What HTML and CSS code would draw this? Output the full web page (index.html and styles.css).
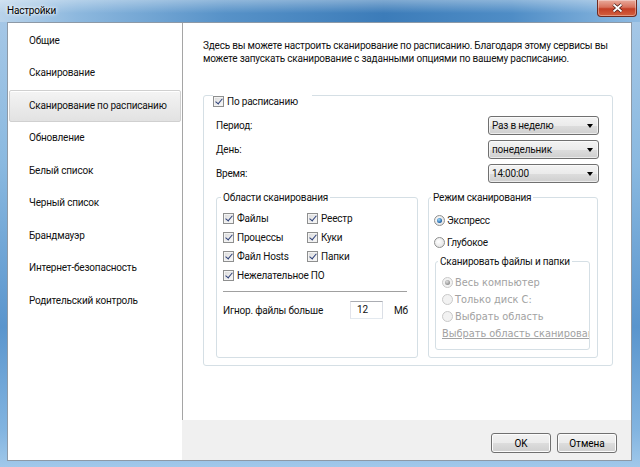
FILE: index.html
```html
<!DOCTYPE html>
<html lang="ru">
<head>
    <meta charset="UTF-8">
    <meta name="viewport" content="width=device-width, initial-scale=1.0">
    <title>Настройки</title>
    <link rel="stylesheet" href="styles.css">
</head>
<body>
<div class="window">
    <div class="titlebar">
        <span class="title">Настройки</span>
        <span class="close">
            <svg width="13" height="10" viewBox="0 0 13 10">
                <path d="M2.5 1.5 L10.5 8.5 M10.5 1.5 L2.5 8.5" stroke="#4a1d15" stroke-width="3.4" fill="none"/>
                <path d="M2.5 1.5 L10.5 8.5 M10.5 1.5 L2.5 8.5" stroke="#fff" stroke-width="1.8" fill="none"/>
            </svg>
        </span>
    </div>

    <div class="client">
        <ul class="nav">
            <li>Общие</li>
            <li>Сканирование</li>
            <li class="active">Сканирование по расписанию</li>
            <li>Обновление</li>
            <li>Белый список</li>
            <li>Черный список</li>
            <li>Брандмауэр</li>
            <li>Интернет-безопасность</li>
            <li>Родительский контроль</li>
        </ul>

        <div class="main">
            <div class="content">
                <p class="intro">Здесь вы можете настроить сканирование по расписанию. Благодаря этому сервисы вы<br>можете запускать сканирование с заданными опциями по вашему расписанию.</p>

                <fieldset class="schedule">
                    <legend><label class="opt"><span class="check on"></span>По расписанию</label></legend>

                    <div class="fields">
                        <span>Период:</span>
                        <div class="select">Раз в неделю</div>
                        <span>День:</span>
                        <div class="select">понедельник</div>
                        <span>Время:</span>
                        <div class="select">14:00:00</div>
                    </div>

                    <div class="groups">
                        <fieldset class="group areas">
                            <legend>Области сканирования</legend>
                            <div class="checks">
                                <label class="opt"><span class="check on"></span>Файлы</label>
                                <label class="opt"><span class="check on"></span>Реестр</label>
                                <label class="opt"><span class="check on"></span>Процессы</label>
                                <label class="opt"><span class="check on"></span>Куки</label>
                                <label class="opt"><span class="check on"></span>Файл Hosts</label>
                                <label class="opt"><span class="check on"></span>Папки</label>
                                <label class="opt wide"><span class="check on"></span>Нежелательное ПО</label>
                            </div>
                            <hr>
                            <div class="size">
                                <span class="size-label">Игнор. файлы больше</span>
                                <span class="input">12</span>
                                <span class="unit">Мб</span>
                            </div>
                        </fieldset>

                        <fieldset class="group modes">
                            <legend>Режим сканирования</legend>
                            <label class="opt radio-row"><span class="radio on"></span>Экспресс</label>
                            <label class="opt radio-row"><span class="radio"></span>Глубокое</label>

                            <fieldset class="group targets">
                                <legend>Сканировать файлы и папки</legend>
                                <label class="opt target"><span class="radio on off"></span>Весь компьютер</label>
                                <label class="opt target"><span class="radio off"></span>Только диск C:</label>
                                <label class="opt target"><span class="radio off"></span>Выбрать область</label>
                                <a class="link">Выбрать область сканирования</a>
                            </fieldset>
                        </fieldset>
                    </div>
                </fieldset>
            </div>

            <div class="footer">
                <button class="btn">OK</button>
                <button class="btn">Отмена</button>
            </div>
        </div>
    </div>
</div>
</body>
</html>
```

FILE: styles.css
```css
*{
    margin: 0;
    padding: 0;
    box-sizing: border-box;
}
html, body{
    width: 640px;
    height: 467px;
    overflow: hidden;
}
body{
    font-family: Roboto, "Noto Sans", Arial, sans-serif;
    font-size: 10px;
    letter-spacing: -0.2px;
    color: #111;
    background: linear-gradient(to bottom, #a9c9e7 0%, #8ab9e0 35%, #5a95cd 70%, #82b4e0 92%, #a0c8ea 100%);
}
.window{
    display: flex;
    flex-direction: column;
    height: 467px;
}
.titlebar{
    height: 22px;
    display: flex;
    justify-content: space-between;
    align-items: flex-start;
    background:
        linear-gradient(to bottom, rgba(255,255,255,.35), rgba(255,255,255,0) 60%),
        linear-gradient(to right, #b9d3ea 0%, #8db8de 12%, #5792c8 35%, #3c7cb9 60%, #4f8dc6 80%, #8fbbe2 100%);
}
.title{
    padding: 4px 0 0 7px;
    line-height: 14px;
    color: #000;
    text-shadow: 0 0 5px #fff, 0 0 3px #fff;
}
.close{
    width: 40px;
    height: 17px;
    margin-right: 3px;
    display: flex;
    align-items: center;
    justify-content: center;
    border: 1px solid #6f2a20;
    border-top: 0;
    border-radius: 0 0 4px 4px;
    background: linear-gradient(to bottom, #e9ab9c 0%, #d8725c 45%, #c43f25 55%, #d4603f 100%);
    box-shadow: inset 0 0 0 1px rgba(255,255,255,.35);
}
.client{
    flex: 1;
    display: flex;
    margin: 0 8px 6px 7px;
    border: 1px solid #8d99a6;
    background: #fff;
}

/* left menu */
.nav{
    list-style: none;
    width: 174px;
    flex: none;
    padding-top: 1.75px;
}
.nav li{
    height: 32.5px;
    line-height: 30.5px;
    margin: 0 1px;
    padding-left: 19px;
    border: 1px solid transparent;
    border-radius: 2px;
    white-space: nowrap;
}
.nav li.active{
    background: linear-gradient(to bottom, #f4f4f4, #e2e2e2);
    border-color: #d0d0d0;
    box-shadow: inset 0 1px 0 #fff;
}

.main{
    flex: 1;
    min-width: 0;
    display: flex;
    flex-direction: column;
}
.content{
    flex: 1;
    border-left: 1px solid #a5a5a5;
    padding: 16px 18px 0 20px;
}
.intro{
    line-height: 13px;
    white-space: nowrap;
}

/* group boxes */
fieldset{
    border: 1px solid #d5dfe5;
    border-radius: 3px;
    min-width: 0;
}
legend{
    padding: 0 2px;
    line-height: 13px;
    white-space: nowrap;
}
.schedule{
    margin-top: 18px;
    padding: 9px 13px 7px 12px;
}
.schedule > legend{
    margin-left: -3px;
    padding: 13px 14px 0 0;
    line-height: 11px;
}
.opt{
    display: flex;
    align-items: center;
    gap: 3px;
    white-space: nowrap;
}
.check{
    position: relative;
    width: 11px;
    height: 11px;
    flex: none;
    border: 1px solid #8e8f8f;
    background: linear-gradient(135deg, #d9d9d9, #fbfbfb);
    box-shadow: inset 0 0 0 1px #f3f3f3;
}
.check.on::after{
    content: "";
    position: absolute;
    left: 3px;
    top: 0;
    width: 3px;
    height: 6px;
    border: solid #2c3f78;
    border-width: 0 1.6px 1.6px 0;
    transform: rotate(40deg);
}
.radio{
    position: relative;
    width: 11px;
    height: 11px;
    flex: none;
    border: 1px solid #8e8f8f;
    border-radius: 50%;
    background: radial-gradient(circle at 40% 40%, #fff, #dcdcdc);
}
.radio.on::after{
    content: "";
    position: absolute;
    left: 2px;
    top: 2px;
    width: 5px;
    height: 5px;
    border-radius: 50%;
    background: radial-gradient(circle at 40% 35%, #9fdcff, #1d5fa3 70%);
}
.radio.off{
    border-color: #c9c9c9;
    background: #f2f2f2;
}
.radio.on.off::after{
    background: radial-gradient(circle at 40% 35%, #e0e0e0, #8a8a8a 75%);
}

.fields{
    display: grid;
    grid-template-columns: 1fr 111px;
    grid-auto-rows: 19px;
    row-gap: 5px;
    align-items: center;
}
.select{
    position: relative;
    height: 19px;
    line-height: 17px;
    padding-left: 3px;
    border: 1px solid #707070;
    border-radius: 3px;
    background: linear-gradient(to bottom, #f3f3f3 0%, #ebebeb 50%, #dddddd 51%, #cfcfcf 100%);
    box-shadow: inset 0 0 0 1px rgba(255,255,255,.6);
}
.select::after{
    content: "";
    position: absolute;
    right: 5px;
    top: 7px;
    border: 3.5px solid transparent;
    border-top: 4px solid #000;
    border-bottom: 0;
}

.groups{
    display: grid;
    grid-template-columns: 202px 170px;
    column-gap: 10px;
    margin-top: 8px;
}
.areas{
    padding: 5px 0 0 6px;
}
.areas > legend{
    margin-left: -2px;
}
.checks{
    display: grid;
    grid-template-columns: 84px auto;
    grid-auto-rows: 19px;
    align-items: center;
}
.checks .wide{
    grid-column: span 2;
}
hr{
    margin: 6px 10px 0 0;
    border: 0;
    border-top: 1px solid #a0a0a0;
}
.size{
    display: flex;
    align-items: center;
    margin-top: 9px;
    height: 18px;
}
.size-label{
    width: 127px;
}
.input{
    width: 33px;
    height: 18px;
    line-height: 16px;
    padding-left: 6px;
    border: 1px solid #abadb3;
    border-left-color: #e2e3ea;
    border-right-color: #dbdfe6;
    border-bottom-color: #e3e9ef;
}
.unit{
    margin-left: 11px;
}

.modes{
    padding: 8px 7px 7px 5px;
}
.modes > legend{
    margin-left: -3px;
}
.radio-row{
    height: 16px;
    gap: 2px;
}
.radio-row + .radio-row{
    margin-top: 6px;
}
.targets{
    margin: 5px 0 0 1px;
    padding: 5px 0 7px 6px;
}
.targets > legend{
    margin-left: -4px;
}
.target{
    height: 17px;
    gap: 2px;
    font-family: "DejaVu Sans", Verdana, sans-serif;
    font-size: 9.8px;
    letter-spacing: 0;
    color: #a2a2a2;
}
.target:first-of-type{
    margin-top: 1px;
}
.link{
    display: block;
    height: 17px;
    line-height: 17px;
    font-family: "DejaVu Sans", Verdana, sans-serif;
    font-size: 9.8px;
    letter-spacing: 0;
    color: #a2a2a2;
    text-decoration: underline;
    white-space: nowrap;
    overflow: hidden;
}

.footer{
    height: 40px;
    display: flex;
    justify-content: flex-end;
    gap: 6px;
    padding: 13px 14px 0 0;
    background: #f0f0f0;
}
.btn{
    width: 60px;
    height: 20px;
    font-family: Roboto, "Noto Sans", Arial, sans-serif;
    font-size: 10px;
    color: #000;
    border: 1px solid #707070;
    border-radius: 3px;
    background: linear-gradient(to bottom, #f2f2f2 0%, #ebebeb 50%, #dddddd 51%, #cfcfcf 100%);
    box-shadow: inset 0 0 0 1px #fcfcfc;
}
```
